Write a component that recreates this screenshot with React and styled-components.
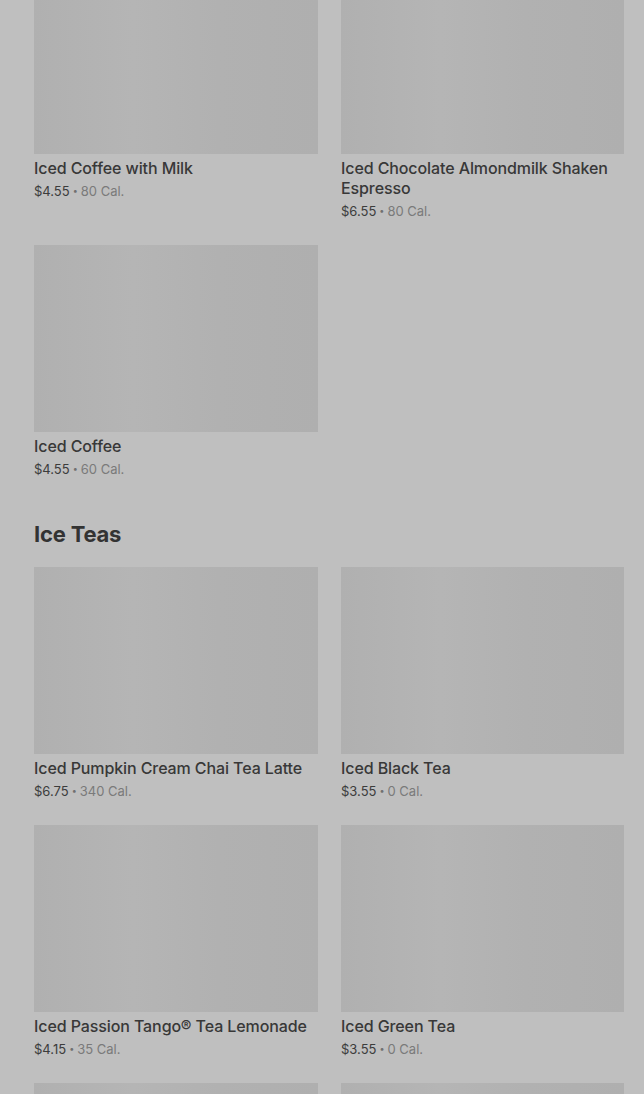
import React from "react";
import styled, { createGlobalStyle } from "styled-components";

const sections = [
  {
    title: null,
    items: [
      { name: "Iced Coffee with Milk", price: "$4.55", cal: "80 Cal." },
      { name: "Iced Chocolate Almondmilk Shaken Espresso", price: "$6.55", cal: "80 Cal." },
      { name: "Iced Coffee", price: "$4.55", cal: "60 Cal." },
    ],
  },
  {
    title: "Ice Teas",
    items: [
      { name: "Iced Pumpkin Cream Chai Tea Latte", price: "$6.75", cal: "340 Cal." },
      { name: "Iced Black Tea", price: "$3.55", cal: "0 Cal." },
      { name: "Iced Passion Tango® Tea Lemonade", price: "$4.15", cal: "35 Cal." },
      { name: "Iced Green Tea", price: "$3.55", cal: "0 Cal." },
      { name: "", price: "", cal: "" },
      { name: "", price: "", cal: "" },
    ],
  },
];

function App() {
  return (
    <>
      <GlobalStyle />
      <Page>
        {sections.map((section, sIndex) => (
          <Section key={sIndex} first={sIndex === 0}>
            {section.title && <Heading>{section.title}</Heading>}
            <Grid>
              {section.items.map((item, index) => (
                <Card key={index}>
                  <Thumb />
                  {item.name && <Name>{item.name}</Name>}
                  {item.price && (
                    <Meta>
                      <Price>{item.price}</Price>
                      <Dot>•</Dot>
                      <Cal>{item.cal}</Cal>
                    </Meta>
                  )}
                </Card>
              ))}
            </Grid>
          </Section>
        ))}
      </Page>
    </>
  );
}

export default App;

const GlobalStyle = createGlobalStyle`
  html, body {
    margin: 0;
    padding: 0;
    background: #bfbfbf;
    overflow: hidden;
  }
  body {
    font-family: Inter, "Noto Sans", Arial, sans-serif;
    -webkit-font-smoothing: antialiased;
  }
`;

const Page = styled.div`
  width: 644px;
  height: 1094px;
  overflow: hidden;
  box-sizing: border-box;
  padding: 0 20px 0 34px;
  background: #bfbfbf;
`;

const Section = styled.section`
  /* page is scrolled a little, so the first row's pictures are cut off */
  margin-top: ${props => props.first ? "-33px" : "41px"};
`;

const Heading = styled.h2`
  margin: 0 0 19px;
  font-size: 22px;
  line-height: 28px;
  height: 28px;
  font-weight: 700;
  color: #333;
  letter-spacing: -0.2px;
`;

const Grid = styled.div`
  display: grid;
  grid-template-columns: 284px 283px;
  column-gap: 23px;
  row-gap: 24px;
  align-items: start;
`;

const Card = styled.div`
  display: flex;
  flex-direction: column;
`;

const Thumb = styled.div`
  height: 187px;
  background: linear-gradient(90deg, #b0b0b0 0%, #b5b5b5 35%, #b1b1b1 65%, #afafaf 100%);
`;

const Name = styled.div`
  margin-top: 4px;
  font-size: 16px;
  line-height: 20px;
  font-weight: 500;
  color: #383838;
  letter-spacing: -0.1px;
`;

const Meta = styled.div`
  margin-top: 3px;
  height: 20px;
  display: flex;
  align-items: center;
  font-size: 13px;
  line-height: 20px;
  color: #3c3c3c;
`;

const Price = styled.span`
  color: #3c3c3c;
`;

const Dot = styled.span`
  margin: 0 3px;
  color: #707070;
  font-size: 9px;
  line-height: 20px;
`;

const Cal = styled.span`
  color: #7a7a7a;
`;
